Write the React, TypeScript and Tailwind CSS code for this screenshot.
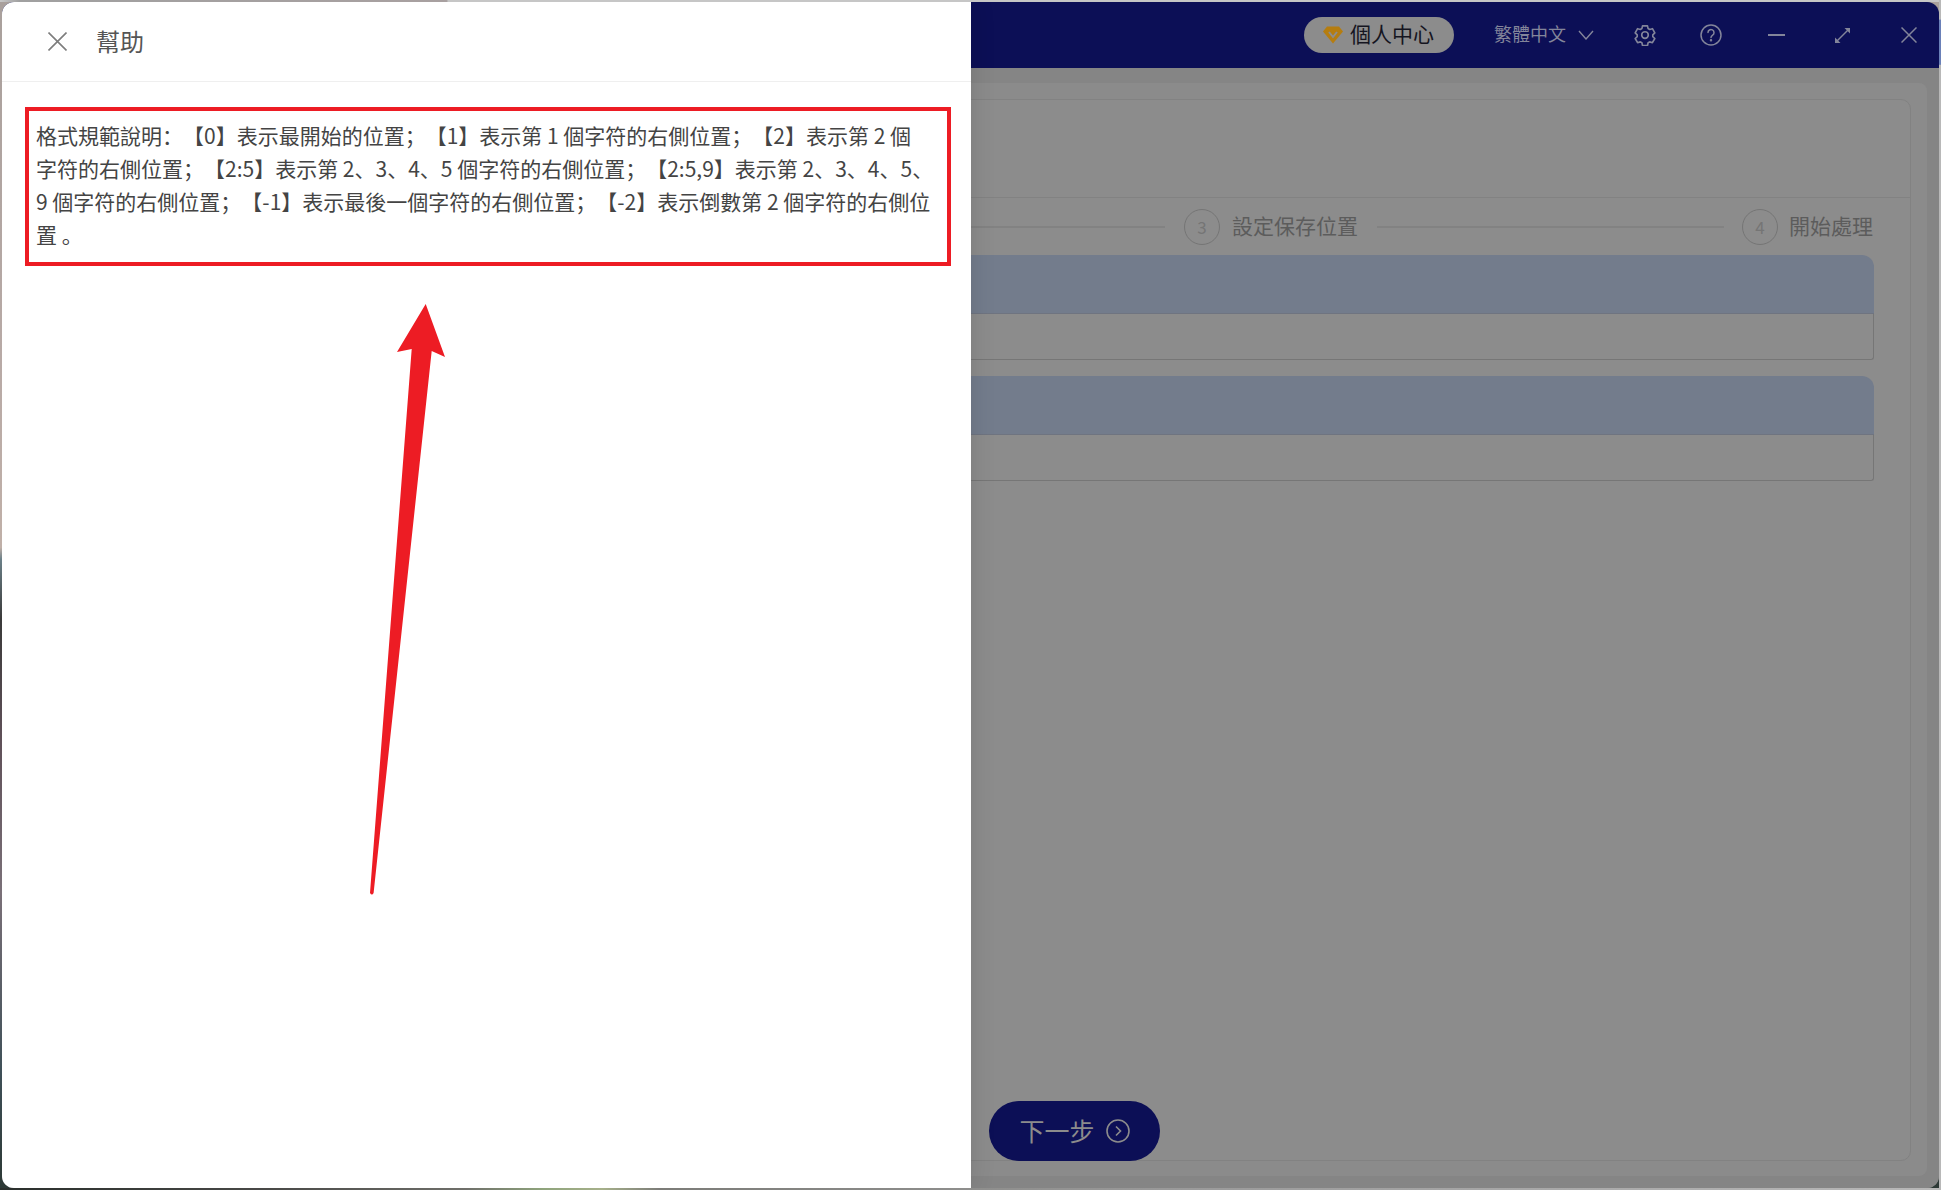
import React from "react";

const FONT = "font-['Noto_Sans_CJK_SC','Noto_Sans_CJK_TC',sans-serif]";

function Diamond() {
  return (
    <svg width="20" height="18" viewBox="0 0 20 18">
      <path d="M4 0.5H16L20 5.5L10 17.5L0 5.5Z" fill="#b57d10" />
      <path d="M6 6L10 11L14 6" fill="none" stroke="#8c8c8c" strokeWidth="2" />
    </svg>
  );
}

function Gear() {
  return (
    <svg width="22" height="22" viewBox="0 0 24 24" fill="none" stroke="#83859a" strokeWidth="1.8" strokeLinejoin="round">
      <path d="M9.3 2h5.4l.7 3 1.7 1 3-.9 2.6 4.6-2.2 2.1v1.9l2.2 2.1-2.6 4.6-3-.9-1.7 1-.7 3H9.3l-.7-3-1.7-1-3 .9-2.6-4.6 2.2-2.1v-1.9L1.3 9.7l2.6-4.6 3 .9 1.7-1z" />
      <circle cx="12" cy="12" r="3.6" />
    </svg>
  );
}

function Step({ n, label, gap }: { n: number; label: string; gap: string }) {
  return (
    <div className={`flex items-center ${gap}`}>
      <div className="w-9 h-9 rounded-full border border-[#757575] flex items-center justify-center text-[17px] text-[#757575]">{n}</div>
      <span className="text-[21px] text-[#5c5c5c] leading-none mb-[2px]">{label}</span>
    </div>
  );
}

function SectionBlock() {
  return (
    <div>
      <div className="h-[59px] rounded-t-[12px] bg-[#737c8c] border-b border-[#6f7480]" />
      <div className="h-[46px] border border-t-0 border-[#767676] rounded-b-[3px]" />
    </div>
  );
}

export default function App() {
  return (
    <div className={`${FONT} relative w-[1941px] h-[1190px] overflow-hidden p-[2px] bg-[linear-gradient(180deg,#a9a09c_0%,#b8aaa6_30%,#c0b0a8_46%,#6b8088_47%,#3a3a3a_52%,#5f5058_62%,#7a7078_75%,#3f5058_90%,#2c3834_100%)]`}>
      {/* edges of the desktop behind the window */}
      <div className="absolute top-0 left-0 right-0 h-[2px] bg-[linear-gradient(90deg,#c8c8c8_0%,#a0a0a0_1%,#a8a0a0_23%,#c6c6c6_23.1%,#c6c6c6_100%)]" />
      <div className="absolute top-0 right-0 bottom-0 w-[2px] bg-[linear-gradient(180deg,#b8b8b8_0%,#b8b8b8_1.6%,#6a80b8_1.7%,#6a80b8_5.4%,#b8b8b8_5.5%,#b8b8b8_100%)]" />
      <div className="absolute bottom-0 left-0 right-0 h-[2px] bg-[linear-gradient(90deg,#2a2f2c_0%,#4a4a48_14%,#6f6f6a_24%,#8fa47c_28%,#a6b08a_31%,#7c7c78_34%,#9a9a9a_60%,#b8b8b8_100%)]" />

      {/* application window */}
      <div className="relative w-[1937px] h-[1186px] rounded-[12px] overflow-hidden bg-[#858585] flex flex-col">
        <div className="h-[66px] shrink-0 bg-[#0c0f56] flex items-center justify-end pr-[22px]">
          <div className="w-[150px] h-9 rounded-full bg-[#8c8c8c] flex items-center gap-[7px] pl-[19px] mr-[40px]">
            <Diamond />
            <span className="text-[21px] text-[#15151f] leading-none mb-[4px]">個人中心</span>
          </div>
          <span className="text-[18px] text-[#83859a] leading-none mr-[12px] mb-[4px]">繁體中文</span>
          <svg className="mr-10" width="16" height="10" viewBox="0 0 16 10" fill="none" stroke="#83859a" strokeWidth="1.4">
            <path d="M1 1l7 8 7-8" />
          </svg>
          <div className="mr-[44px]"><Gear /></div>
          <svg className="mr-[46px]" width="22" height="22" viewBox="0 0 22 22" fill="none" stroke="#83859a" strokeWidth="1.5" strokeLinecap="round">
            <circle cx="11" cy="11" r="10" />
            <path d="M8 8.6a3 3 0 1 1 4.6 2.5c-1 .7-1.6 1.2-1.6 2.5" />
            <circle cx="11" cy="16.3" r=".5" fill="#83859a" />
          </svg>
          <div className="w-[17px] h-[2px] bg-[#83859a] mr-[49px]" />
          <svg className="mr-[50px]" width="17" height="17" viewBox="0 0 17 17" fill="none" stroke="#83859a" strokeWidth="1.5">
            <path d="M1.5 15.5L15.5 1.5" />
            <path d="M10.5 1H16V6.5L10.5 1Z" fill="#83859a" stroke="none" />
            <path d="M1 10.5V16H6.5L1 10.5Z" fill="#83859a" stroke="none" />
          </svg>
          <svg width="16" height="16" viewBox="0 0 16 16" fill="none" stroke="#83859a" strokeWidth="1.5">
            <path d="M.5.5l15 15M15.5.5l-15 15" />
          </svg>
        </div>

        <div className="flex-1 px-[12px] pt-[15px] pb-[12px] bg-[#858585]">
          <div className="h-[1093px] rounded-[8px] bg-[#8b8b8b] px-4 pt-4 pb-[15px]">
            <div className="h-full rounded-[10px] border border-[#828282] bg-[#8c8c8c] flex flex-col">
              <div className="h-[98px] shrink-0 border-b border-[#828282]" />
              <div className="flex items-center justify-end h-[57px] pr-[37px]">
                <div className="w-[200px] h-[2px] bg-[#828282] mr-[19px]" />
                <Step n={3} label="設定保存位置" gap="gap-[12px]" />
                <div className="w-[347px] h-[2px] bg-[#828282] ml-[19px] mr-[18px]" />
                <Step n={4} label="開始處理" gap="gap-[11px]" />
              </div>
              <div className="flex flex-col gap-4 px-[36px]">
                <SectionBlock />
                <SectionBlock />
              </div>
              <div className="flex-1" />
            </div>
          </div>
        </div>

        <button className="absolute left-[987px] top-[1099px] w-[171px] h-[60px] rounded-full bg-[#0c0f56] flex items-center justify-center gap-[11px] text-[25px] text-[#8c8c8c] leading-none">
          <span className="mb-[2px]">下一步</span>
          <svg width="24" height="24" viewBox="0 0 24 24" fill="none" stroke="#8c8c8c" strokeWidth="1.6">
            <circle cx="12" cy="12" r="11" />
            <path d="M10 7.5l4.5 4.5-4.5 4.5" />
          </svg>
        </button>

        {/* help drawer */}
        <div className="absolute left-0 top-0 bottom-0 w-[969px] bg-white flex flex-col shadow-[0_0_24px_rgba(0,0,0,0.12)]">
          <div className="h-[80px] shrink-0 border-b border-[#efefef] flex items-center pl-[46px]">
            <svg width="19" height="19" viewBox="0 0 19 19" fill="none" stroke="#7d7d7d" strokeWidth="1.6">
              <path d="M.5.5l18 18M18.5.5l-18 18" />
            </svg>
            <span className="ml-[29px] text-[24px] text-[#555555] leading-none mb-[2px]">幫助</span>
          </div>
          <div className="mt-[25px] ml-[23px] w-[926px] h-[159px] border-4 border-[#ed1c24] pl-[7px] pt-[8px] text-[21px] leading-[33px] text-[#444444] whitespace-nowrap [text-spacing-trim:space-all]">
            格式規範說明：【0】表示最開始的位置；【1】表示第 1 個字符的右側位置；【2】表示第 2 個
            <br />
            字符的右側位置；【2:5】表示第 2、3、4、5 個字符的右側位置；【2:5,9】表示第 2、3、4、5、
            <br />
            9 個字符的右側位置；【-1】表示最後一個字符的右側位置；【-2】表示倒數第 2 個字符的右側位
            <br />
            置 。
          </div>
          <svg className="absolute left-[358px] top-[298px]" width="100" height="600" viewBox="360 300 100 600">
            <path d="M370 893L411.7 349L397 352L425.7 304L445 357L431.7 351L373.6 893Q372 896 370 893Z" fill="#ed1c24" />
          </svg>
        </div>
      </div>
    </div>
  );
}
